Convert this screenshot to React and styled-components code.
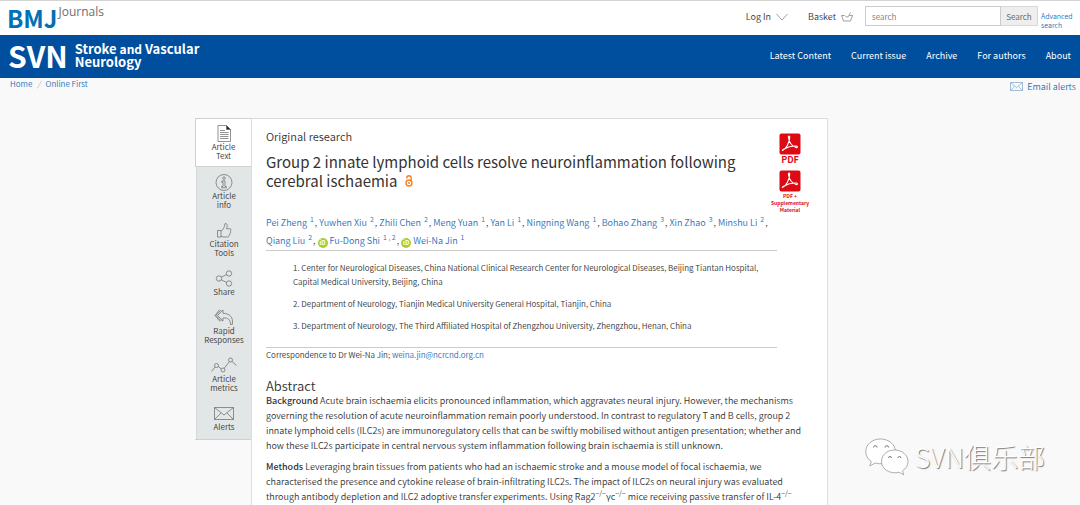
import React from 'react'
import styled, { createGlobalStyle } from 'styled-components';


const tabs = [
  { lines: ['Article', 'Text'], icon: 'text' },
  { lines: ['Article', 'info'], icon: 'info' },
  { lines: ['Citation', 'Tools'], icon: 'thumb' },
  { lines: ['Share'], icon: 'share' },
  { lines: ['Rapid', 'Responses'], icon: 'reply' },
  { lines: ['Article', 'metrics'], icon: 'metrics' },
  { lines: ['Alerts'], icon: 'mail' },
];

const authors = [
  { name: 'Pei Zheng', notes: '1' },
  { name: 'Yuwhen Xiu', notes: '2' },
  { name: 'Zhili Chen', notes: '2' },
  { name: 'Meng Yuan', notes: '1' },
  { name: 'Yan Li', notes: '1' },
  { name: 'Ningning Wang', notes: '1' },
  { name: 'Bohao Zhang', notes: '3' },
  { name: 'Xin Zhao', notes: '3' },
  { name: 'Minshu Li', notes: '2' },
  { name: 'Qiang Liu', notes: '2', breakBefore: true },
  { name: 'Fu-Dong Shi', notes: '1 , 2', orcid: true },
  { name: 'Wei-Na Jin', notes: '1', orcid: true },
];

const navLinks = ['Latest Content', 'Current issue', 'Archive', 'For authors', 'About'];

function TabIcon({ name }) {
  return (
    <LineIcon viewBox="0 0 26 17" width="26" height="17" aria-hidden="true">
      {name === 'text' && (
        <>
          <path d="M7 .5h8.500l4 4v12H7z" />
          <path d="M15.500.5v4h4z" fill="#222" />
          <path d="M9 5.500h5M9 7.500h8.500M9 9.500h8.500M9 11.500h8.500M9 13.500h8.500" />
        </>
      )}
      {name === 'info' && (
        <>
          <circle cx="13" cy="8.500" r="8" />
          <circle cx="13" cy="4.200" r="1.300" />
          <path d="M10.800 7h3.200v5.500h1.300v1.300h-4.600v-1.300H12V8.300h-1.200z" />
        </>
      )}
      {name === 'thumb' && (
        <>
          <path d="M6.500 8.500h3.500v6.500H6.500z" />
          <path d="M10 9c2-1 3.500-3.500 4-7.500 2.500-.3 2.600 2.500 1.500 5.200h3.300c1.600.2 1.600 2 .4 2.400.8.800.5 2-.4 2.300.4.900 0 1.800-.8 2 .1 1-.5 1.600-1.500 1.600H12L10 14" />
        </>
      )}
      {name === 'share' && (
        <>
          <circle cx="8" cy="8.500" r="2.700" />
          <circle cx="18" cy="3.500" r="2.700" />
          <circle cx="18" cy="13.500" r="2.700" />
          <path d="M10.300 7.200l5.400-2.700M10.300 9.800l5.400 2.700" />
        </>
      )}
      {name === 'reply' && (
        <>
          <path d="M12 1L6.500 6.500l5.500 5.500V9c5-.5 7.500 1.500 7.500 6.500h1.800C22.500 8.500 19 4.500 12 4.300z" />
          <path d="M8.500.8L4 6.500l5 6M10 1L5 6.500l5.500 5.800" />
        </>
      )}
      {name === 'metrics' && (
        <>
          <circle cx="5.500" cy="8.500" r="2" />
          <circle cx="12" cy="13" r="2" />
          <circle cx="19.500" cy="3" r="2" />
          <path d="M.5 14.500L4 10M7.200 9.500l3 2.300M13.200 11.300l5-6.500M21 4.500L25.500 8.500" />
        </>
      )}
      {name === 'mail' && (
        <>
          <path d="M3.500 2.500h19v12h-19z" />
          <path d="M3.500 2.500l9.500 7.500 9.500-7.500M3.500 14.500l6.500-6.500M22.500 14.500l-6.500-6.500" />
        </>
      )}
    </LineIcon>
  )
}

function PdfIcon() {
  return (
    <svg viewBox="0 0 22 22" width="22" height="22" aria-hidden="true">
      <rect x=".5" y=".5" width="21" height="21" rx="2" fill="#dd0a14" />
      <path
        d="M3.500 17.500c3.500-1.500 7-7.500 7.200-13.500.1-1.300-1.500-1-1.200.5.600 4.500 3.300 8.500 7.500 10 1.800.5 2-1.300.2-1.500-4.500-.2-8.700.9-12.500 3.200-1 .6-1.600 1.200-1.200 1.300z"
        fill="none" stroke="#fff" strokeWidth="1.200"
      />
    </svg>
  )
}

function App() {
  return (
    <Page>
      <GlobalStyle />
      <TopBar>
        <Brand href="#bmj"><b>BMJ</b><span>Journals</span></Brand>
        <Tools>
          <ToolButton type="button">
            Log In
            <LineIcon viewBox="0 0 12 8" width="12" height="8"><path d="M.5 1L6 7l5.500-6" /></LineIcon>
          </ToolButton>
          <ToolButton type="button">
            Basket
            <LineIcon viewBox="0 0 12 10" width="12" height="10">
              <path d="M3.500 3.500h-3l2 5.500h7l2-5.500H8.500M4 3.500l1.500 1.500h1.500l2.500-4.500" />
            </LineIcon>
          </ToolButton>
          <SearchForm role="search">
            <input type="text" placeholder="search" aria-label="search" />
            <button type="button">Search</button>
          </SearchForm>
          <Advanced href="#advanced">Advanced search</Advanced>
        </Tools>
      </TopBar>

      <Masthead>
        <JournalLogo href="#home">
          <b>SVN</b>
          <span>Stroke <small>and</small> Vascular<br />Neurology</span>
        </JournalLogo>
        <Nav>
          {navLinks.map((label) => <a key={label} href="#nav">{label}</a>)}
        </Nav>
      </Masthead>

      <SubBar>
        <Crumbs>
          <a href="#home">Home</a><i>/</i><a href="#online">Online First</a>
        </Crumbs>
        <EmailLink href="#alerts">
          <LineIcon viewBox="0 0 13 9" width="13" height="9">
            <path d="M.5.5h12v8H.5zM.5.5l6 5 6-5M.5 8.500l4-4M12.500 8.500l-4-4" />
          </LineIcon>
          Email alerts
        </EmailLink>
      </SubBar>

      <Content>
        <Sidebar>
          {tabs.map((tab, index) => (
            <Tab key={tab.icon} href={`#${tab.icon}`} $active={index === 0}>
              <TabIcon name={tab.icon} />
              {tab.lines.map((line) => <span key={line}>{line}</span>)}
            </Tab>
          ))}
        </Sidebar>

        <Article>
          <Header>
            <div>
              <Kind>Original research</Kind>
              <Title>
                Group 2 innate lymphoid cells resolve neuroinflammation following<br />
                cerebral ischaemia
                <svg viewBox="0 0 8 12" width="8" height="12" aria-label="Open access">
                  <g fill="none" stroke="#f5821f" strokeWidth="1.400">
                    <circle cx="4" cy="8" r="3" />
                    <path d="M1.800 3.500V3a2.200 2.200 0 0 1 4.400 0v4" />
                  </g>
                  <circle cx="4" cy="8" r="1" fill="#f5821f" />
                </svg>
              </Title>
            </div>
            <Downloads>
              <PdfLink href="#pdf"><PdfIcon /><b>PDF</b></PdfLink>
              <PdfLink href="#supplement" $small><PdfIcon /><b>PDF +<br />Supplementary<br />Material</b></PdfLink>
            </Downloads>
          </Header>

          <Authors>
            {authors.map((author, index) => (
              <React.Fragment key={author.name}>
                {author.breakBefore && <br />}
                {author.orcid && <Orcid>iD</Orcid>}
                <a href="#author">{author.name}</a> <sup>{author.notes}</sup>
                {index < authors.length - 1 && ', '}
              </React.Fragment>
            ))}
          </Authors>

          <Affiliations>
            <li>1. Center for Neurological Diseases, China National Clinical Research Center for Neurological Diseases, Beijing Tiantan Hospital,<br />Capital Medical University, Beijing, China</li>
            <li>2. Department of Neurology, Tianjin Medical University General Hospital, Tianjin, China</li>
            <li>3. Department of Neurology, The Third Affiliated Hospital of Zhengzhou University, Zhengzhou, Henan, China</li>
          </Affiliations>
          <Correspondence>
            Correspondence to Dr Wei-Na Jin; <a href="#mail">weina.jin@ncrcnd.org.cn</a>
          </Correspondence>

          <Heading>Abstract</Heading>
          <Paragraph>
            <b>Background</b> Acute brain ischaemia elicits pronounced inflammation, which aggravates neural injury. However, the mechanisms<br />
            governing the resolution of acute neuroinflammation remain poorly understood. In contrast to regulatory T and B cells, group 2<br />
            innate lymphoid cells (ILC2s) are immunoregulatory cells that can be swiftly mobilised without antigen presentation; whether and<br />
            how these ILC2s participate in central nervous system inflammation following brain ischaemia is still unknown.
          </Paragraph>
          <Paragraph>
            <b>Methods</b> Leveraging brain tissues from patients who had an ischaemic stroke and a mouse model of focal ischaemia, we<br />
            characterised the presence and cytokine release of brain-infiltrating ILC2s. The impact of ILC2s on neural injury was evaluated<br />
            through antibody depletion and ILC2 adoptive transfer experiments. Using Rag2<sup>−/−</sup>γc<sup>−/−</sup> mice receiving passive transfer of IL-4<sup>−/−</sup>
          </Paragraph>
        </Article>
      </Content>

      <Watermark>
        <svg viewBox="0 0 44 38" width="44" height="38" aria-hidden="true">
          <g fill="#fff" stroke="#999" strokeWidth=".8">
            <path d="M15.500 1C7 1 .8 6.500.8 13.500c0 4.300 2 7.500 5.500 10L4.800 28l5.500-3c8.500 2.500 20-1 20-11.500C30.300 6.500 24 1 15.500 1z" />
            <path d="M29.500 12c-7.500 0-13 5-13 11.500 0 8 9 13 17.500 10.700l4.800 2.600-1.300-4C41 30.500 43 27.500 43 23.500 43 17 37 12 29.500 12z" />
          </g>
          <g fill="none" stroke="#777">
            <path d="M8.500 9.500a1.800 1.800 0 0 1 3.600 0M20 9.500a1.800 1.800 0 0 1 3.600 0M23.500 20a1.500 1.500 0 0 1 3 0M33 20a1.500 1.500 0 0 1 3 0" />
          </g>
        </svg>
        SVN俱乐部
      </Watermark>
    </Page>
  )
}


const GlobalStyle = createGlobalStyle`
  * {
    box-sizing: border-box;
  }

  body {
    margin: 0;
    background: #f9f9f9;
    color: #333;
    font-family: "Noto Sans CJK SC", "Noto Sans", sans-serif;
    font-size: 10px;
    font-weight: 350;
  }

  a {
    color: #1f70b8;
    text-decoration: none;
  }

  button, input {
    font-family: inherit;
    font-weight: inherit;
  }
`

const Page = styled.div`
  position: relative;
  height: 100vh;
  overflow: hidden;
`

const LineIcon = styled.svg`
  fill: none;
  stroke: currentColor;
  stroke-width: 0.7;
`

const TopBar = styled.header`
  display: flex;
  justify-content: space-between;
  height: 35px;
  padding: 0 3px 0 7px;
  background: white;
  border-top: 1px solid #d4d4d4;
`

const Brand = styled.a`
  display: flex;
  gap: 1px;
  color: #0070b8;

  b {
    font-size: 24px;
    font-weight: 700;
    line-height: 34px;
  }

  span {
    color: #6d6e71;
    font: 400 12px/22px "Open Sans", sans-serif;
  }
`

const Tools = styled.div`
  display: flex;
  align-items: flex-start;
`

const ToolButton = styled.button`
  display: flex;
  align-items: center;
  gap: 5px;
  margin: 8px 12px 0 8px;
  padding: 0;
  border: 0;
  background: none;
  color: #333;
  font-size: 9px;
  line-height: 16px;

  svg {
    color: #777;
  }
`

const SearchForm = styled.form`
  display: flex;
  height: 20px;
  margin-top: 5px;

  input {
    width: 136px;
    padding: 0 6px;
    border: 1px solid #ccc;
    font-size: 8px;
  }

  input::placeholder {
    color: #777;
  }

  button {
    width: 37px;
    padding: 0;
    border: 1px solid #d8d8d8;
    border-left: 0;
    background: #eee;
    color: #555;
    font-size: 8px;
  }
`

const Advanced = styled.a`
  width: 36px;
  margin: 11px 0 0 3px;
  font-size: 7px;
  line-height: 9px;
`

const Masthead = styled.div`
  display: flex;
  align-items: center;
  justify-content: space-between;
  height: 43px;
  padding: 0 9px 0 8px;
  background: #004f9f;
`

const JournalLogo = styled.a`
  display: flex;
  align-items: center;
  gap: 7px;
  color: white;

  b {
    padding-bottom: 4px;
    font-size: 30px;
    font-weight: 700;
    line-height: 38px;
  }

  span {
    padding-bottom: 4px;
    font-size: 13px;
    font-weight: 700;
    line-height: 13px;
  }

  small {
    font-size: 12px;
  }
`

const Nav = styled.nav`
  display: flex;
  gap: 20px;

  a {
    padding-bottom: 2px;
    color: white;
    font-size: 9px;
    font-weight: 400;
    line-height: 14px;
  }
`

const SubBar = styled.div`
  display: flex;
  justify-content: space-between;
  height: 40px;
  padding: 0 4px 0 10px;
`

const Crumbs = styled.div`
  font-size: 8px;
  line-height: 12px;

  i {
    margin: 0 5px;
    color: #aaa;
  }
`

const EmailLink = styled.a`
  display: flex;
  align-items: center;
  gap: 4px;
  height: 17px;
  font-size: 9px;

  svg {
    color: #7fa5c9;
  }
`

const Content = styled.main`
  display: grid;
  grid-template-columns: 56px minmax(0, 577px);
  align-items: start;
  padding-left: 195px;
`

const Sidebar = styled.nav`
  display: flex;
  flex-direction: column;
  padding-bottom: 2px;
  background: linear-gradient(to right, #f9f9f9 1px, #d5d8d8 1px, #e3e6e6 3px);
  border-bottom: 1px solid #d0d0d0;
`

const Tab = styled.a`
  display: flex;
  flex-direction: column;
  align-items: center;
  padding: ${(props) => (props.$active ? '6px 0' : '7px 0 6px 2px')};
  background: ${(props) => (props.$active ? 'white' : 'transparent')};
  border: ${(props) => (props.$active ? '1px solid #d0d0d0' : '0')};
  border-right: 0;
  color: #333;
  font-size: 8px;
  line-height: 9px;

  svg {
    color: #666;
  }
`

const Article = styled.article`
  min-height: 400px;
  padding: 8px 14px 0;
  background: white;
  border: 1px solid #ddd;
  white-space: nowrap;
`

const Header = styled.div`
  display: flex;
  justify-content: space-between;
`

const Kind = styled.p`
  margin: 0;
  font-size: 11px;
  line-height: 18px;
`

const Title = styled.h1`
  margin: 7px 0 0;
  font-size: 15px;
  font-weight: 400;
  line-height: 19px;

  svg {
    margin-left: 8px;
  }
`

const Downloads = styled.div`
  width: 46px;
  padding-top: 6px;
`

const PdfLink = styled.a`
  display: flex;
  flex-direction: column;
  align-items: center;
  height: 37px;
  color: #dd0a14;
  text-align: center;

  svg {
    flex-shrink: 0;
  }

  b {
    font-size: ${(props) => (props.$small ? '5px' : '9px')};
    font-weight: 700;
    line-height: ${(props) => (props.$small ? '7px' : '9px')};
  }
`

const Authors = styled.p`
  width: 511px;
  margin: 7px 0 0;
  border-bottom: 1px solid #ccc;
  font-size: 9px;
  line-height: 18px;

  sup {
    margin: 0 1px;
    color: #1f70b8;
    font-size: 7px;
    line-height: 0;
  }
`

const Orcid = styled.span`
  display: inline-block;
  width: 10px;
  height: 10px;
  margin-right: 2px;
  border-radius: 50%;
  background: #a6ce39;
  color: white;
  font-size: 6px;
  font-weight: 700;
  line-height: 10px;
  text-align: center;
  vertical-align: -1px;
`

const Affiliations = styled.ul`
  width: 511px;
  margin: 0;
  padding: 10px 0 6px 27px;
  border-bottom: 1px solid #ccc;
  list-style: none;

  li {
    margin-bottom: 8px;
    font-size: 8px;
    line-height: 14px;
  }
`

const Correspondence = styled.p`
  margin: 0;
  font-size: 8px;
  line-height: 14px;
`

const Heading = styled.h2`
  margin: 16px 0 0;
  font-size: 13px;
  font-weight: 350;
  line-height: 15px;
`

const Paragraph = styled.p`
  margin: 0 0 6px;
  font-size: 9px;
  line-height: 15px;

  b {
    font-weight: 500;
  }

  sup {
    font-size: 7px;
    line-height: 0;
  }
`

const Watermark = styled.div`
  position: absolute;
  right: 35px;
  bottom: 28px;
  display: flex;
  align-items: center;
  gap: 5px;
  color: white;
  font-size: 27px;
  font-weight: 300;
  line-height: 40px;
  text-shadow: 1px 1px 1px #777;
`



export default App;
